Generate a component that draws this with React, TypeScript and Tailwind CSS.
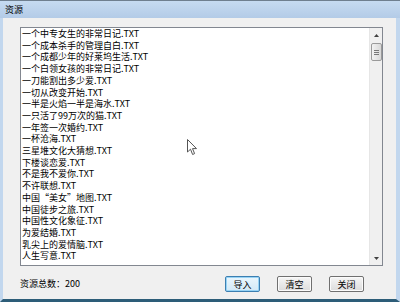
import React from "react";

const FILES = [
  "一个中专女生的非常日记",
  "一个成本杀手的管理自白",
  "一个成都少年的好莱坞生活",
  "一个白领女孩的非常日记",
  "一刀能割出多少爱",
  "一切从改变开始",
  "一半是火焰一半是海水",
  "一只活了99万次的猫",
  "一年签一次婚约",
  "一杯沧海",
  "三星堆文化大猜想",
  "下楼谈恋爱",
  "不是我不爱你",
  "不许联想",
  "中国“美女”地图",
  "中国徒步之旅",
  "中国性文化象征",
  "为爱结婚",
  "乳尖上的爱情脑",
  "人生写意",
];

function Button({ label, focused }: { label: string; focused?: boolean }) {
  return (
    <div
      className={
        "w-[35px] h-[16px] rounded-[2px] flex items-center justify-center text-[9px] leading-none text-black " +
        (focused
          ? "border border-[#3c7fb1] bg-gradient-to-b from-[#eaf6fd] to-[#d2e9f7] shadow-[inset_0_0_0_1px_#97d3f5]"
          : "border border-[#707070] bg-gradient-to-b from-[#f6f6f6] to-[#dcdcdc] shadow-[inset_0_0_0_1px_#fbfbfb]")
      }
    >
      {label}
    </div>
  );
}

export default function App() {
  return (
    <div
      className="relative w-[400px] h-[302px] overflow-hidden bg-[#f0f0f0] flex flex-col"
      style={{ fontFamily: '"Noto Sans CJK SC", "Noto Sans", sans-serif' }}
    >
      {/* title bar */}
      <div className="h-[18px] shrink-0 border-t border-[#6f7f8f] bg-gradient-to-b from-[#c6dbf1] to-[#b3cbe7] flex items-center pl-[5px] text-[9px] text-black">
        资源
      </div>

      <div className="flex-1 flex border-l-[3px] border-r-[4px] border-b-[3px] border-l-[#c2d7ee] border-r-[#c2d7ee] border-b-[#2d5d78]">
        <div className="flex-1 flex flex-col pl-[17px] pr-[14px] pt-[9px]">
          {/* list box */}
          <div className="h-[239px] w-[363px] border border-[#828790] bg-white flex">
            <div className="flex-1 pl-[1px] text-[9px] leading-[11.7px] text-black whitespace-nowrap">
              {FILES.map((f) => (
                <div key={f}>{f}.TXT</div>
              ))}
            </div>
            {/* scrollbar */}
            <div className="w-[13px] bg-[#f0f0f0] border-l border-[#e6e6e6] flex flex-col items-center">
              <div className="h-[14px] w-full flex items-center justify-center">
                <svg width="5" height="3" viewBox="0 0 5 3">
                  <path d="M2.5 0 L5 3 L0 3 Z" fill="#404040" />
                </svg>
              </div>
              <div className="w-[11px] h-[18px] mt-[1px] rounded-[2px] border border-[#9a9a9a] bg-gradient-to-r from-[#f2f2f2] to-[#d8d8d8] flex flex-col items-center justify-center gap-[1px]">
                <div className="w-[5px] h-[1px] bg-[#777]" />
                <div className="w-[5px] h-[1px] bg-[#777]" />
                <div className="w-[5px] h-[1px] bg-[#777]" />
              </div>
              <div className="flex-1" />
              <div className="h-[14px] w-full flex items-center justify-center">
                <svg width="5" height="3" viewBox="0 0 5 3">
                  <path d="M0 0 L5 0 L2.5 3 Z" fill="#404040" />
                </svg>
              </div>
            </div>
          </div>

          {/* footer */}
          <div className="flex items-start pt-[10px]">
            <div className="text-[9px] leading-none text-black pt-[3px]">资源总数：200</div>
            <div className="flex-1" />
            <div className="flex gap-[17px] pr-[19px]">
              <Button label="导入" focused />
              <Button label="清空" />
              <Button label="关闭" />
            </div>
          </div>
        </div>
      </div>

      {/* mouse pointer */}
      <svg className="absolute left-[187px] top-[139px]" width="11" height="17" viewBox="0 0 11 17">
        <path
          d="M0.5 0.5 L0.5 13 L3.5 10.2 L5.6 15.5 L7.6 14.6 L5.5 9.6 L9.5 9.6 Z"
          fill="#ffffff"
          stroke="#555"
          strokeWidth="1"
          strokeLinejoin="round"
        />
      </svg>
    </div>
  );
}
